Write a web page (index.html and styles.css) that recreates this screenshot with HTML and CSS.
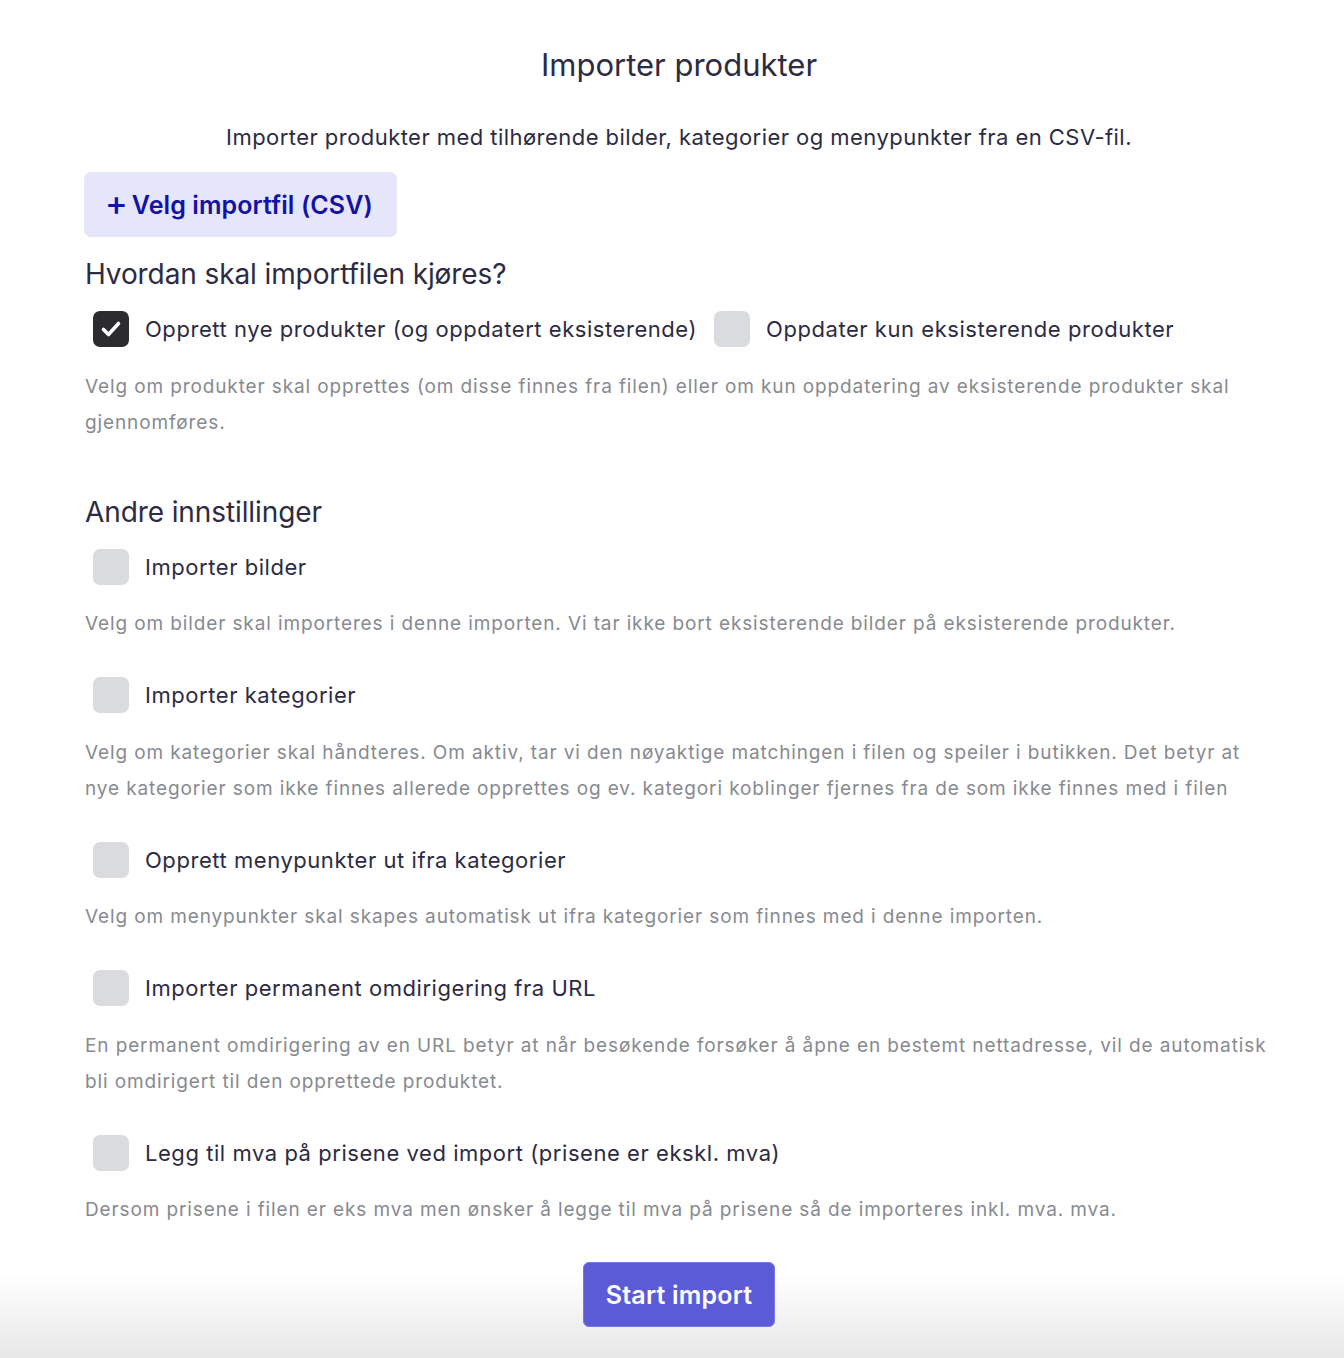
FILE: index.html
```html
<!DOCTYPE html>
<html lang="no">
<head>
<meta charset="utf-8" />
<title>Importer produkter</title>
<link rel="stylesheet" href="styles.css">
</head>
<body>
<!--包裹层-->
<div class="wrap">
    <h1 class="title">Importer produkter</h1>
    <p class="lead">Importer produkter med tilhørende bilder, kategorier og menypunkter fra en CSV-fil.</p>

    <button class="file-btn" type="button"><span class="plus">+</span>Velg importfil (CSV)</button>

    <!--kjøremodus-->
    <h2 class="section">Hvordan skal importfilen kjøres?</h2>
    <div class="row">
        <label class="check"><span class="box on"><svg viewBox="0 0 36 36" width="36" height="36"><path d="M10.5 18.5l5 5L25.5 12.5" fill="none" stroke="#fff" stroke-width="3.6" stroke-linecap="round" stroke-linejoin="round"/></svg></span>Opprett nye produkter (og oppdatert eksisterende)</label>
        <label class="check"><span class="box"></span>Oppdater kun eksisterende produkter</label>
    </div>
    <p class="hint">Velg om produkter skal opprettes (om disse finnes fra filen) eller om kun oppdatering av eksisterende produkter skal gjennomføres.</p>

    <!--andre innstillinger-->
    <h2 class="section second">Andre innstillinger</h2>
    <div class="option">
        <label class="check"><span class="box"></span>Importer bilder</label>
        <p class="hint">Velg om bilder skal importeres i denne importen. Vi tar ikke bort eksisterende bilder på eksisterende produkter.</p>
    </div>
    <div class="option">
        <label class="check"><span class="box"></span>Importer kategorier</label>
        <p class="hint">Velg om kategorier skal håndteres. Om aktiv, tar vi den nøyaktige matchingen i filen og speiler i butikken. Det betyr at nye kategorier som ikke finnes allerede opprettes og ev. kategori koblinger fjernes fra de som ikke finnes med i filen</p>
    </div>
    <div class="option">
        <label class="check"><span class="box"></span>Opprett menypunkter ut ifra kategorier</label>
        <p class="hint">Velg om menypunkter skal skapes automatisk ut ifra kategorier som finnes med i denne importen.</p>
    </div>
    <div class="option">
        <label class="check"><span class="box"></span>Importer permanent omdirigering fra URL</label>
        <p class="hint">En permanent omdirigering av en URL betyr at når besøkende forsøker å åpne en bestemt nettadresse, vil de automatisk bli omdirigert til den opprettede produktet.</p>
    </div>
    <div class="option">
        <label class="check"><span class="box"></span>Legg til mva på prisene ved import (prisene er ekskl. mva)</label>
        <p class="hint">Dersom prisene i filen er eks mva men ønsker å legge til mva på prisene så de importeres inkl. mva. mva.</p>
    </div>
</div>

<div class="footer">
    <div class="footer-in">
        <button class="start-btn" type="button">Start import</button>
    </div>
</div>
</body>
</html>
```

FILE: styles.css
```css
/*清除默认样式*/
body,h1,h2,p{margin:0; padding:0;}
body{font-family:Inter, "Noto Sans", sans-serif; color:#2c2b43; background:#fff;}
button{font-family:inherit; cursor:pointer;}
/*包裹层*/
.wrap{width:1188px; margin:0 0 0 85px; padding-top:45px;}
.title{font-size:31px; font-weight:400; line-height:40px; text-align:center;}
.lead{font-size:22px; line-height:36px; text-align:center; margin-top:34px; letter-spacing:0.45px;}
.file-btn{display:flex; align-items:center; height:65px; margin:17px 0 0 -1px; padding:0 24px 0 21px; border:none; border-radius:7px; background:#e6e6fb; color:#1212a6; font-size:25px; font-weight:600; letter-spacing:0.1px;}
.plus{font-size:34px; font-weight:500; margin-right:4px; line-height:1; position:relative; top:-2px;}
/*标题*/
.section{font-size:28px; font-weight:400; line-height:40px; margin-top:17px; letter-spacing:-0.1px;}
.section.second{margin-top:51px;}
.row{display:flex; gap:9px; margin-top:17px;}
.check{display:flex; align-items:center; height:36px; padding-left:8px; font-size:22px; line-height:36px; letter-spacing:0.55px;}
.box{display:flex; align-items:center; justify-content:center; width:36px; height:36px; border-radius:7px; background:#d9dbde; margin-right:16px; flex:none;}
.box.on{background:#2c2c30;}
.hint{font-size:19px; line-height:36px; color:#878a90; letter-spacing:0.88px; margin-top:21.5px;}
.option{margin-top:35px;}
.section + .option{margin-top:17px;}
/*底部*/
.footer{padding:34px 0 31px; background:linear-gradient(to bottom, #fff 0%, #fff 35%, #e7e7e7 100%);}
.footer-in{width:1188px; margin-left:85px; display:flex; justify-content:center;}
.start-btn{height:65px; padding:0 22px; border:1px solid #7878e6; border-radius:6px; background:#5b5bd6; color:#fff; font-size:25px; font-weight:600; letter-spacing:0.2px;}
```
